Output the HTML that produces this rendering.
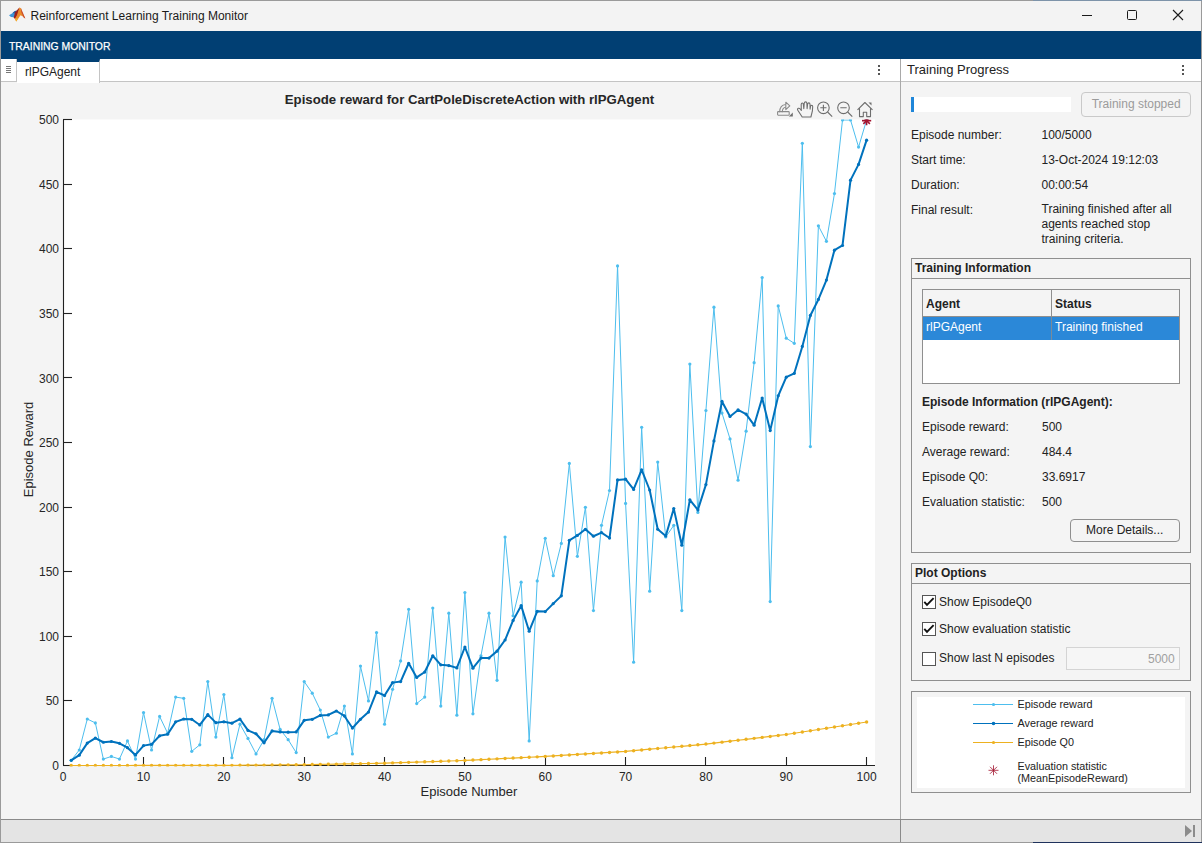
<!DOCTYPE html>
<html><head><meta charset="utf-8">
<style>
*{box-sizing:border-box;margin:0;padding:0}
html,body{width:1202px;height:843px;overflow:hidden;background:#f0f0f0;font-family:"Liberation Sans",sans-serif;font-size:12px;color:#000}
.a{position:absolute}
.t{position:absolute;white-space:nowrap;line-height:14px}
</style></head><body>
<div class="a" style="left:0;top:0;width:1202px;height:843px;background:#f4f4f4;border:1px solid #9a9a9a"></div>
<!-- title bar -->
<div class="a" style="left:1px;top:1px;width:1200px;height:30px;background:#f3f3f3"></div>
<svg class="a" style="left:4px;top:2px" width="26" height="26" viewBox="4 2 26 26">
  <polygon points="9,15.3 12,13.6 14.5,11.5 16.3,11.8 16,15.5 13.5,17.2 11,17" fill="#3b93d6"/>
  <polygon points="12.5,13 14.8,11 17,10.5 15.5,13.5" fill="#2e5e9e"/>
  <polygon points="15,12.5 19.4,7.6 18.5,13 16.5,17.5 14.8,19 13.8,17.2" fill="#9a1f1f"/>
  <polygon points="19.4,7.6 21,8.2 22.5,13 25.3,18.6 22.5,16.3 20.5,15.2 18,19 16.3,21.6 14.8,19 17,15" fill="#ea8a2b"/>
  <polygon points="21,8.2 25.3,18.6 23.8,17.8 21.3,12" fill="#c9472a"/>
  <polygon points="15,19 18,18.2 16.3,21.6" fill="#f6b42a"/>
</svg>
<div class="t" style="left:30.5px;top:9px;font-size:12px;color:#1a1a1a">Reinforcement Learning Training Monitor</div>
<!-- window controls -->
<div class="a" style="left:1082px;top:15px;width:10px;height:1px;background:#1a1a1a"></div>
<div class="a" style="left:1127px;top:10px;width:10px;height:10px;border:1px solid #1a1a1a;border-radius:1.5px"></div>
<svg class="a" style="left:1172px;top:9px" width="12" height="12" viewBox="0 0 12 12"><path d="M1,1 L11,11 M11,1 L1,11" stroke="#1a1a1a" stroke-width="1.1"/></svg>
<!-- blue header -->
<div class="a" style="left:1px;top:31px;width:1200px;height:28px;background:#013f73"></div>
<div class="t" style="left:9px;top:39px;font-size:11px;color:#fff;-webkit-text-stroke:0.25px #fff;transform-origin:0 0;transform:scaleX(0.945)">TRAINING MONITOR</div>

<!-- left tab strip -->
<div class="a" style="left:1px;top:59px;width:899px;height:23px;background:#fff;border-bottom:1px solid #c4c4c4"></div>
<div class="a" style="left:1px;top:59px;width:16px;height:23px;background:#fff;border-right:1px solid #c4c4c4;border-bottom:1px solid #c4c4c4"></div>
<div class="a" style="left:6px;top:66px;width:5px;height:1px;background:#777"></div>
<div class="a" style="left:6px;top:68px;width:5px;height:1px;background:#777"></div>
<div class="a" style="left:6px;top:70px;width:5px;height:1px;background:#777"></div>
<div class="a" style="left:6px;top:72px;width:5px;height:1px;background:#777"></div>
<div class="a" style="left:17px;top:59px;width:83px;height:24px;background:#fff;border-top:3px solid #013f73;border-right:1px solid #c4c4c4"></div>
<div class="t" style="left:25px;top:64.5px;font-size:12px;color:#222">rlPGAgent</div>
<div class="a" style="left:878px;top:65px;width:2px;height:2px;background:#555"></div>
<div class="a" style="left:878px;top:69px;width:2px;height:2px;background:#555"></div>
<div class="a" style="left:878px;top:73px;width:2px;height:2px;background:#555"></div>

<!-- plot -->
<svg width="900" height="819" style="position:absolute;left:0;top:0">
<defs><clipPath id="ax"><rect x="63" y="119.5" width="812" height="647"/></clipPath></defs>
<rect x="63.5" y="119.5" width="811.5" height="646" fill="#fff"/>
<g stroke="#212121" stroke-width="1.1"><line x1="63.5" y1="119.5" x2="63.5" y2="765.5"/><line x1="63" y1="765.5" x2="875" y2="765.5"/><line x1="63" y1="765.50" x2="72" y2="765.50"/><line x1="63" y1="700.50" x2="72" y2="700.50"/><line x1="63" y1="636.50" x2="72" y2="636.50"/><line x1="63" y1="571.50" x2="72" y2="571.50"/><line x1="63" y1="507.50" x2="72" y2="507.50"/><line x1="63" y1="442.50" x2="72" y2="442.50"/><line x1="63" y1="377.50" x2="72" y2="377.50"/><line x1="63" y1="313.50" x2="72" y2="313.50"/><line x1="63" y1="248.50" x2="72" y2="248.50"/><line x1="63" y1="184.50" x2="72" y2="184.50"/><line x1="63" y1="119.50" x2="72" y2="119.50"/><line x1="143.50" y1="765.5" x2="143.50" y2="757"/><line x1="223.50" y1="765.5" x2="223.50" y2="757"/><line x1="304.50" y1="765.5" x2="304.50" y2="757"/><line x1="384.50" y1="765.5" x2="384.50" y2="757"/><line x1="464.50" y1="765.5" x2="464.50" y2="757"/><line x1="545.50" y1="765.5" x2="545.50" y2="757"/><line x1="625.50" y1="765.5" x2="625.50" y2="757"/><line x1="705.50" y1="765.5" x2="705.50" y2="757"/><line x1="786.50" y1="765.5" x2="786.50" y2="757"/><line x1="866.50" y1="765.5" x2="866.50" y2="757"/></g>
<g clip-path="url(#ax)">
<polyline points="71.23,760.34 79.27,750.01 87.30,719.02 95.34,722.90 103.37,759.04 111.40,756.46 119.44,759.04 127.47,740.97 135.51,759.04 143.54,712.57 151.57,750.01 159.61,716.44 167.64,733.23 175.68,697.08 183.71,698.37 191.74,751.30 199.78,744.84 207.81,681.59 215.85,737.10 223.88,694.50 231.91,757.75 239.95,724.19 247.98,738.39 256.02,753.88 264.05,739.68 272.08,698.37 280.12,729.35 288.15,739.68 296.19,752.59 304.22,681.59 312.25,693.20 320.29,709.99 328.32,737.10 336.36,733.23 344.39,706.11 352.42,753.88 360.46,666.09 368.49,700.95 376.53,632.53 384.56,724.19 392.59,689.33 400.63,660.93 408.66,609.29 416.70,703.53 424.73,697.08 432.76,608.00 440.80,706.11 448.83,613.16 456.87,715.15 464.90,592.51 472.93,713.86 480.97,655.76 489.00,613.16 497.04,680.29 505.07,536.99 513.10,615.74 521.14,582.18 529.17,740.97 537.21,580.89 545.24,538.28 553.27,575.72 561.31,543.45 569.34,463.41 577.38,556.36 585.41,507.30 593.44,610.58 601.48,525.37 609.51,490.52 617.55,265.88 625.58,503.43 633.61,662.22 641.65,427.26 649.68,591.22 657.72,462.12 665.75,536.99 673.78,525.37 681.82,610.58 689.85,364.00 697.89,512.46 705.92,410.48 713.95,307.20 721.99,413.06 730.02,438.88 738.06,480.19 746.09,431.13 754.12,362.71 762.16,277.50 770.19,601.54 778.23,305.90 786.26,338.18 794.29,343.34 802.33,143.24 810.36,446.62 818.40,225.86 826.43,241.35 834.46,193.59 842.50,120.00 850.53,120.00 858.57,147.11 866.60,120.00" fill="none" stroke="#4DBEEE" stroke-width="1" stroke-linejoin="round"/>
<g fill="#4DBEEE"><circle cx="71.23" cy="760.34" r="1.6"/><circle cx="79.27" cy="750.01" r="1.6"/><circle cx="87.30" cy="719.02" r="1.6"/><circle cx="95.34" cy="722.90" r="1.6"/><circle cx="103.37" cy="759.04" r="1.6"/><circle cx="111.40" cy="756.46" r="1.6"/><circle cx="119.44" cy="759.04" r="1.6"/><circle cx="127.47" cy="740.97" r="1.6"/><circle cx="135.51" cy="759.04" r="1.6"/><circle cx="143.54" cy="712.57" r="1.6"/><circle cx="151.57" cy="750.01" r="1.6"/><circle cx="159.61" cy="716.44" r="1.6"/><circle cx="167.64" cy="733.23" r="1.6"/><circle cx="175.68" cy="697.08" r="1.6"/><circle cx="183.71" cy="698.37" r="1.6"/><circle cx="191.74" cy="751.30" r="1.6"/><circle cx="199.78" cy="744.84" r="1.6"/><circle cx="207.81" cy="681.59" r="1.6"/><circle cx="215.85" cy="737.10" r="1.6"/><circle cx="223.88" cy="694.50" r="1.6"/><circle cx="231.91" cy="757.75" r="1.6"/><circle cx="239.95" cy="724.19" r="1.6"/><circle cx="247.98" cy="738.39" r="1.6"/><circle cx="256.02" cy="753.88" r="1.6"/><circle cx="264.05" cy="739.68" r="1.6"/><circle cx="272.08" cy="698.37" r="1.6"/><circle cx="280.12" cy="729.35" r="1.6"/><circle cx="288.15" cy="739.68" r="1.6"/><circle cx="296.19" cy="752.59" r="1.6"/><circle cx="304.22" cy="681.59" r="1.6"/><circle cx="312.25" cy="693.20" r="1.6"/><circle cx="320.29" cy="709.99" r="1.6"/><circle cx="328.32" cy="737.10" r="1.6"/><circle cx="336.36" cy="733.23" r="1.6"/><circle cx="344.39" cy="706.11" r="1.6"/><circle cx="352.42" cy="753.88" r="1.6"/><circle cx="360.46" cy="666.09" r="1.6"/><circle cx="368.49" cy="700.95" r="1.6"/><circle cx="376.53" cy="632.53" r="1.6"/><circle cx="384.56" cy="724.19" r="1.6"/><circle cx="392.59" cy="689.33" r="1.6"/><circle cx="400.63" cy="660.93" r="1.6"/><circle cx="408.66" cy="609.29" r="1.6"/><circle cx="416.70" cy="703.53" r="1.6"/><circle cx="424.73" cy="697.08" r="1.6"/><circle cx="432.76" cy="608.00" r="1.6"/><circle cx="440.80" cy="706.11" r="1.6"/><circle cx="448.83" cy="613.16" r="1.6"/><circle cx="456.87" cy="715.15" r="1.6"/><circle cx="464.90" cy="592.51" r="1.6"/><circle cx="472.93" cy="713.86" r="1.6"/><circle cx="480.97" cy="655.76" r="1.6"/><circle cx="489.00" cy="613.16" r="1.6"/><circle cx="497.04" cy="680.29" r="1.6"/><circle cx="505.07" cy="536.99" r="1.6"/><circle cx="513.10" cy="615.74" r="1.6"/><circle cx="521.14" cy="582.18" r="1.6"/><circle cx="529.17" cy="740.97" r="1.6"/><circle cx="537.21" cy="580.89" r="1.6"/><circle cx="545.24" cy="538.28" r="1.6"/><circle cx="553.27" cy="575.72" r="1.6"/><circle cx="561.31" cy="543.45" r="1.6"/><circle cx="569.34" cy="463.41" r="1.6"/><circle cx="577.38" cy="556.36" r="1.6"/><circle cx="585.41" cy="507.30" r="1.6"/><circle cx="593.44" cy="610.58" r="1.6"/><circle cx="601.48" cy="525.37" r="1.6"/><circle cx="609.51" cy="490.52" r="1.6"/><circle cx="617.55" cy="265.88" r="1.6"/><circle cx="625.58" cy="503.43" r="1.6"/><circle cx="633.61" cy="662.22" r="1.6"/><circle cx="641.65" cy="427.26" r="1.6"/><circle cx="649.68" cy="591.22" r="1.6"/><circle cx="657.72" cy="462.12" r="1.6"/><circle cx="665.75" cy="536.99" r="1.6"/><circle cx="673.78" cy="525.37" r="1.6"/><circle cx="681.82" cy="610.58" r="1.6"/><circle cx="689.85" cy="364.00" r="1.6"/><circle cx="697.89" cy="512.46" r="1.6"/><circle cx="705.92" cy="410.48" r="1.6"/><circle cx="713.95" cy="307.20" r="1.6"/><circle cx="721.99" cy="413.06" r="1.6"/><circle cx="730.02" cy="438.88" r="1.6"/><circle cx="738.06" cy="480.19" r="1.6"/><circle cx="746.09" cy="431.13" r="1.6"/><circle cx="754.12" cy="362.71" r="1.6"/><circle cx="762.16" cy="277.50" r="1.6"/><circle cx="770.19" cy="601.54" r="1.6"/><circle cx="778.23" cy="305.90" r="1.6"/><circle cx="786.26" cy="338.18" r="1.6"/><circle cx="794.29" cy="343.34" r="1.6"/><circle cx="802.33" cy="143.24" r="1.6"/><circle cx="810.36" cy="446.62" r="1.6"/><circle cx="818.40" cy="225.86" r="1.6"/><circle cx="826.43" cy="241.35" r="1.6"/><circle cx="834.46" cy="193.59" r="1.6"/><circle cx="842.50" cy="120.00" r="1.6"/><circle cx="850.53" cy="120.00" r="1.6"/><circle cx="858.57" cy="147.11" r="1.6"/><circle cx="866.60" cy="120.00" r="1.6"/></g>
<polyline points="71.23,760.34 79.27,755.17 87.30,743.12 95.34,738.07 103.37,742.26 111.40,741.49 119.44,743.29 127.47,747.68 135.51,754.91 143.54,745.62 151.57,744.33 159.61,735.81 167.64,734.26 175.68,721.86 183.71,719.02 191.74,719.28 199.78,724.96 207.81,714.63 215.85,722.64 223.88,721.86 231.91,723.16 239.95,719.02 247.98,730.38 256.02,733.74 264.05,742.78 272.08,730.90 280.12,731.93 288.15,732.19 296.19,731.93 304.22,720.32 312.25,719.28 320.29,715.41 328.32,714.89 336.36,711.02 344.39,715.93 352.42,728.06 360.46,719.28 368.49,712.05 376.53,691.91 384.56,695.53 392.59,682.62 400.63,681.59 408.66,663.25 416.70,677.45 424.73,672.03 432.76,655.76 440.80,664.80 448.83,665.58 456.87,667.90 464.90,646.99 472.93,668.16 480.97,658.09 489.00,658.09 497.04,651.12 505.07,640.01 513.10,620.39 521.14,605.67 529.17,631.24 537.21,611.35 545.24,611.61 553.27,603.61 561.31,595.86 569.34,540.35 577.38,535.44 585.41,529.25 593.44,536.22 601.48,532.60 609.51,538.03 617.55,479.93 625.58,479.16 633.61,489.48 641.65,469.86 649.68,490.00 657.72,529.25 665.75,535.96 673.78,508.59 681.82,545.26 689.85,499.81 697.89,509.88 705.92,484.58 713.95,440.94 721.99,401.44 730.02,416.41 738.06,409.96 746.09,414.09 754.12,425.19 762.16,398.08 770.19,430.61 778.23,395.76 786.26,377.17 794.29,373.29 802.33,346.44 810.36,315.46 818.40,299.45 826.43,280.08 834.46,250.13 842.50,245.49 850.53,180.16 858.57,164.41 866.60,140.14" fill="none" stroke="#0072BD" stroke-width="2" stroke-linejoin="round"/>
<g fill="#0072BD"><circle cx="71.23" cy="760.34" r="1.6"/><circle cx="79.27" cy="755.17" r="1.6"/><circle cx="87.30" cy="743.12" r="1.6"/><circle cx="95.34" cy="738.07" r="1.6"/><circle cx="103.37" cy="742.26" r="1.6"/><circle cx="111.40" cy="741.49" r="1.6"/><circle cx="119.44" cy="743.29" r="1.6"/><circle cx="127.47" cy="747.68" r="1.6"/><circle cx="135.51" cy="754.91" r="1.6"/><circle cx="143.54" cy="745.62" r="1.6"/><circle cx="151.57" cy="744.33" r="1.6"/><circle cx="159.61" cy="735.81" r="1.6"/><circle cx="167.64" cy="734.26" r="1.6"/><circle cx="175.68" cy="721.86" r="1.6"/><circle cx="183.71" cy="719.02" r="1.6"/><circle cx="191.74" cy="719.28" r="1.6"/><circle cx="199.78" cy="724.96" r="1.6"/><circle cx="207.81" cy="714.63" r="1.6"/><circle cx="215.85" cy="722.64" r="1.6"/><circle cx="223.88" cy="721.86" r="1.6"/><circle cx="231.91" cy="723.16" r="1.6"/><circle cx="239.95" cy="719.02" r="1.6"/><circle cx="247.98" cy="730.38" r="1.6"/><circle cx="256.02" cy="733.74" r="1.6"/><circle cx="264.05" cy="742.78" r="1.6"/><circle cx="272.08" cy="730.90" r="1.6"/><circle cx="280.12" cy="731.93" r="1.6"/><circle cx="288.15" cy="732.19" r="1.6"/><circle cx="296.19" cy="731.93" r="1.6"/><circle cx="304.22" cy="720.32" r="1.6"/><circle cx="312.25" cy="719.28" r="1.6"/><circle cx="320.29" cy="715.41" r="1.6"/><circle cx="328.32" cy="714.89" r="1.6"/><circle cx="336.36" cy="711.02" r="1.6"/><circle cx="344.39" cy="715.93" r="1.6"/><circle cx="352.42" cy="728.06" r="1.6"/><circle cx="360.46" cy="719.28" r="1.6"/><circle cx="368.49" cy="712.05" r="1.6"/><circle cx="376.53" cy="691.91" r="1.6"/><circle cx="384.56" cy="695.53" r="1.6"/><circle cx="392.59" cy="682.62" r="1.6"/><circle cx="400.63" cy="681.59" r="1.6"/><circle cx="408.66" cy="663.25" r="1.6"/><circle cx="416.70" cy="677.45" r="1.6"/><circle cx="424.73" cy="672.03" r="1.6"/><circle cx="432.76" cy="655.76" r="1.6"/><circle cx="440.80" cy="664.80" r="1.6"/><circle cx="448.83" cy="665.58" r="1.6"/><circle cx="456.87" cy="667.90" r="1.6"/><circle cx="464.90" cy="646.99" r="1.6"/><circle cx="472.93" cy="668.16" r="1.6"/><circle cx="480.97" cy="658.09" r="1.6"/><circle cx="489.00" cy="658.09" r="1.6"/><circle cx="497.04" cy="651.12" r="1.6"/><circle cx="505.07" cy="640.01" r="1.6"/><circle cx="513.10" cy="620.39" r="1.6"/><circle cx="521.14" cy="605.67" r="1.6"/><circle cx="529.17" cy="631.24" r="1.6"/><circle cx="537.21" cy="611.35" r="1.6"/><circle cx="545.24" cy="611.61" r="1.6"/><circle cx="553.27" cy="603.61" r="1.6"/><circle cx="561.31" cy="595.86" r="1.6"/><circle cx="569.34" cy="540.35" r="1.6"/><circle cx="577.38" cy="535.44" r="1.6"/><circle cx="585.41" cy="529.25" r="1.6"/><circle cx="593.44" cy="536.22" r="1.6"/><circle cx="601.48" cy="532.60" r="1.6"/><circle cx="609.51" cy="538.03" r="1.6"/><circle cx="617.55" cy="479.93" r="1.6"/><circle cx="625.58" cy="479.16" r="1.6"/><circle cx="633.61" cy="489.48" r="1.6"/><circle cx="641.65" cy="469.86" r="1.6"/><circle cx="649.68" cy="490.00" r="1.6"/><circle cx="657.72" cy="529.25" r="1.6"/><circle cx="665.75" cy="535.96" r="1.6"/><circle cx="673.78" cy="508.59" r="1.6"/><circle cx="681.82" cy="545.26" r="1.6"/><circle cx="689.85" cy="499.81" r="1.6"/><circle cx="697.89" cy="509.88" r="1.6"/><circle cx="705.92" cy="484.58" r="1.6"/><circle cx="713.95" cy="440.94" r="1.6"/><circle cx="721.99" cy="401.44" r="1.6"/><circle cx="730.02" cy="416.41" r="1.6"/><circle cx="738.06" cy="409.96" r="1.6"/><circle cx="746.09" cy="414.09" r="1.6"/><circle cx="754.12" cy="425.19" r="1.6"/><circle cx="762.16" cy="398.08" r="1.6"/><circle cx="770.19" cy="430.61" r="1.6"/><circle cx="778.23" cy="395.76" r="1.6"/><circle cx="786.26" cy="377.17" r="1.6"/><circle cx="794.29" cy="373.29" r="1.6"/><circle cx="802.33" cy="346.44" r="1.6"/><circle cx="810.36" cy="315.46" r="1.6"/><circle cx="818.40" cy="299.45" r="1.6"/><circle cx="826.43" cy="280.08" r="1.6"/><circle cx="834.46" cy="250.13" r="1.6"/><circle cx="842.50" cy="245.49" r="1.6"/><circle cx="850.53" cy="180.16" r="1.6"/><circle cx="858.57" cy="164.41" r="1.6"/><circle cx="866.60" cy="140.14" r="1.6"/></g>
<polyline points="71.23,765.50 79.27,765.50 87.30,765.49 95.34,765.49 103.37,765.49 111.40,765.48 119.44,765.48 127.47,765.48 135.51,765.47 143.54,765.47 151.57,765.47 159.61,765.46 167.64,765.46 175.68,765.46 183.71,765.45 191.74,765.45 199.78,765.45 207.81,765.44 215.85,765.44 223.88,765.44 231.91,765.36 239.95,765.29 247.98,765.22 256.02,765.15 264.05,765.08 272.08,765.01 280.12,764.94 288.15,764.87 296.19,764.80 304.22,764.73 312.25,764.57 320.29,764.42 328.32,764.26 336.36,764.11 344.39,763.95 352.42,763.80 360.46,763.64 368.49,763.49 376.53,763.33 384.56,763.18 392.59,762.91 400.63,762.63 408.66,762.36 416.70,762.09 424.73,761.82 432.76,761.55 440.80,761.28 448.83,761.01 456.87,760.74 464.90,760.47 472.93,760.06 480.97,759.66 489.00,759.26 497.04,758.86 505.07,758.46 513.10,758.06 521.14,757.66 529.17,757.26 537.21,756.86 545.24,756.46 553.27,755.96 561.31,755.46 569.34,754.95 577.38,754.45 585.41,753.95 593.44,753.44 601.48,752.94 609.51,752.44 617.55,751.93 625.58,751.43 633.61,750.69 641.65,749.96 649.68,749.22 657.72,748.48 665.75,747.75 673.78,747.01 681.82,746.28 689.85,745.54 697.89,744.81 705.92,744.07 713.95,743.11 721.99,742.16 730.02,741.20 738.06,740.25 746.09,739.29 754.12,738.34 762.16,737.38 770.19,736.43 778.23,735.47 786.26,734.52 794.29,733.27 802.33,732.01 810.36,730.76 818.40,729.51 826.43,728.26 834.46,727.01 842.50,725.76 850.53,724.51 858.57,723.26 866.60,722.01" fill="none" stroke="#EDB120" stroke-width="1.2"/>
<g fill="#EDB120"><circle cx="71.23" cy="765.50" r="1.7"/><circle cx="79.27" cy="765.50" r="1.7"/><circle cx="87.30" cy="765.49" r="1.7"/><circle cx="95.34" cy="765.49" r="1.7"/><circle cx="103.37" cy="765.49" r="1.7"/><circle cx="111.40" cy="765.48" r="1.7"/><circle cx="119.44" cy="765.48" r="1.7"/><circle cx="127.47" cy="765.48" r="1.7"/><circle cx="135.51" cy="765.47" r="1.7"/><circle cx="143.54" cy="765.47" r="1.7"/><circle cx="151.57" cy="765.47" r="1.7"/><circle cx="159.61" cy="765.46" r="1.7"/><circle cx="167.64" cy="765.46" r="1.7"/><circle cx="175.68" cy="765.46" r="1.7"/><circle cx="183.71" cy="765.45" r="1.7"/><circle cx="191.74" cy="765.45" r="1.7"/><circle cx="199.78" cy="765.45" r="1.7"/><circle cx="207.81" cy="765.44" r="1.7"/><circle cx="215.85" cy="765.44" r="1.7"/><circle cx="223.88" cy="765.44" r="1.7"/><circle cx="231.91" cy="765.36" r="1.7"/><circle cx="239.95" cy="765.29" r="1.7"/><circle cx="247.98" cy="765.22" r="1.7"/><circle cx="256.02" cy="765.15" r="1.7"/><circle cx="264.05" cy="765.08" r="1.7"/><circle cx="272.08" cy="765.01" r="1.7"/><circle cx="280.12" cy="764.94" r="1.7"/><circle cx="288.15" cy="764.87" r="1.7"/><circle cx="296.19" cy="764.80" r="1.7"/><circle cx="304.22" cy="764.73" r="1.7"/><circle cx="312.25" cy="764.57" r="1.7"/><circle cx="320.29" cy="764.42" r="1.7"/><circle cx="328.32" cy="764.26" r="1.7"/><circle cx="336.36" cy="764.11" r="1.7"/><circle cx="344.39" cy="763.95" r="1.7"/><circle cx="352.42" cy="763.80" r="1.7"/><circle cx="360.46" cy="763.64" r="1.7"/><circle cx="368.49" cy="763.49" r="1.7"/><circle cx="376.53" cy="763.33" r="1.7"/><circle cx="384.56" cy="763.18" r="1.7"/><circle cx="392.59" cy="762.91" r="1.7"/><circle cx="400.63" cy="762.63" r="1.7"/><circle cx="408.66" cy="762.36" r="1.7"/><circle cx="416.70" cy="762.09" r="1.7"/><circle cx="424.73" cy="761.82" r="1.7"/><circle cx="432.76" cy="761.55" r="1.7"/><circle cx="440.80" cy="761.28" r="1.7"/><circle cx="448.83" cy="761.01" r="1.7"/><circle cx="456.87" cy="760.74" r="1.7"/><circle cx="464.90" cy="760.47" r="1.7"/><circle cx="472.93" cy="760.06" r="1.7"/><circle cx="480.97" cy="759.66" r="1.7"/><circle cx="489.00" cy="759.26" r="1.7"/><circle cx="497.04" cy="758.86" r="1.7"/><circle cx="505.07" cy="758.46" r="1.7"/><circle cx="513.10" cy="758.06" r="1.7"/><circle cx="521.14" cy="757.66" r="1.7"/><circle cx="529.17" cy="757.26" r="1.7"/><circle cx="537.21" cy="756.86" r="1.7"/><circle cx="545.24" cy="756.46" r="1.7"/><circle cx="553.27" cy="755.96" r="1.7"/><circle cx="561.31" cy="755.46" r="1.7"/><circle cx="569.34" cy="754.95" r="1.7"/><circle cx="577.38" cy="754.45" r="1.7"/><circle cx="585.41" cy="753.95" r="1.7"/><circle cx="593.44" cy="753.44" r="1.7"/><circle cx="601.48" cy="752.94" r="1.7"/><circle cx="609.51" cy="752.44" r="1.7"/><circle cx="617.55" cy="751.93" r="1.7"/><circle cx="625.58" cy="751.43" r="1.7"/><circle cx="633.61" cy="750.69" r="1.7"/><circle cx="641.65" cy="749.96" r="1.7"/><circle cx="649.68" cy="749.22" r="1.7"/><circle cx="657.72" cy="748.48" r="1.7"/><circle cx="665.75" cy="747.75" r="1.7"/><circle cx="673.78" cy="747.01" r="1.7"/><circle cx="681.82" cy="746.28" r="1.7"/><circle cx="689.85" cy="745.54" r="1.7"/><circle cx="697.89" cy="744.81" r="1.7"/><circle cx="705.92" cy="744.07" r="1.7"/><circle cx="713.95" cy="743.11" r="1.7"/><circle cx="721.99" cy="742.16" r="1.7"/><circle cx="730.02" cy="741.20" r="1.7"/><circle cx="738.06" cy="740.25" r="1.7"/><circle cx="746.09" cy="739.29" r="1.7"/><circle cx="754.12" cy="738.34" r="1.7"/><circle cx="762.16" cy="737.38" r="1.7"/><circle cx="770.19" cy="736.43" r="1.7"/><circle cx="778.23" cy="735.47" r="1.7"/><circle cx="786.26" cy="734.52" r="1.7"/><circle cx="794.29" cy="733.27" r="1.7"/><circle cx="802.33" cy="732.01" r="1.7"/><circle cx="810.36" cy="730.76" r="1.7"/><circle cx="818.40" cy="729.51" r="1.7"/><circle cx="826.43" cy="728.26" r="1.7"/><circle cx="834.46" cy="727.01" r="1.7"/><circle cx="842.50" cy="725.76" r="1.7"/><circle cx="850.53" cy="724.51" r="1.7"/><circle cx="858.57" cy="723.26" r="1.7"/><circle cx="866.60" cy="722.01" r="1.7"/></g>
<g stroke="#A2142F" stroke-width="1.6"><line x1="862.00" y1="120.60" x2="871.20" y2="120.60"/><line x1="863.35" y1="117.35" x2="869.85" y2="123.85"/><line x1="866.60" y1="116.00" x2="866.60" y2="125.20"/><line x1="869.85" y1="117.35" x2="863.35" y2="123.85"/></g>
</g>
<g font-family="Liberation Sans" font-size="12" fill="#262626"><text x="59" y="769.80" text-anchor="end">0</text><text x="59" y="705.25" text-anchor="end">50</text><text x="59" y="640.70" text-anchor="end">100</text><text x="59" y="576.15" text-anchor="end">150</text><text x="59" y="511.60" text-anchor="end">200</text><text x="59" y="447.05" text-anchor="end">250</text><text x="59" y="382.50" text-anchor="end">300</text><text x="59" y="317.95" text-anchor="end">350</text><text x="59" y="253.40" text-anchor="end">400</text><text x="59" y="188.85" text-anchor="end">450</text><text x="59" y="124.30" text-anchor="end">500</text><text x="63.20" y="780.8" text-anchor="middle">0</text><text x="143.54" y="780.8" text-anchor="middle">10</text><text x="223.88" y="780.8" text-anchor="middle">20</text><text x="304.22" y="780.8" text-anchor="middle">30</text><text x="384.56" y="780.8" text-anchor="middle">40</text><text x="464.90" y="780.8" text-anchor="middle">50</text><text x="545.24" y="780.8" text-anchor="middle">60</text><text x="625.58" y="780.8" text-anchor="middle">70</text><text x="705.92" y="780.8" text-anchor="middle">80</text><text x="786.26" y="780.8" text-anchor="middle">90</text><text x="866.60" y="780.8" text-anchor="middle">100</text></g>
<text x="469" y="795.6" text-anchor="middle" font-family="Liberation Sans" font-size="13" fill="#262626">Episode Number</text>
<text transform="translate(33,449.5) rotate(-90)" text-anchor="middle" font-family="Liberation Sans" font-size="13" fill="#262626">Episode Reward</text>
<text x="469.5" y="104" text-anchor="middle" font-family="Liberation Sans" font-size="13.2" font-weight="bold" fill="#262626">Episode reward for CartPoleDiscreteAction with rlPGAgent</text>
</svg>
<!-- axes toolbar -->
<svg class="a" style="left:774px;top:98px" width="104" height="22" viewBox="774 97.4 104 22">
 <g fill="none" stroke="#8a8a8a" stroke-width="1.1" stroke-linejoin="round">
  <rect x="777.6" y="111" width="11.6" height="3.6" rx="0.6"/>
  <path d="M779.6,111.6 Q779.8,104.2 785.8,103.9 M782.2,111.6 Q782.4,106.8 785.8,106.6"/>
  <path d="M785.8,101.6 L789.8,105.3 L785.8,109 Z" fill="#f4f4f4"/>
 </g>
 <path d="M788.8,116 l4,-4 v4 z" fill="#6e6e6e"/>
 <g fill="none" stroke="#6e6e6e" stroke-width="1.1" stroke-linejoin="round">
  <path d="M802.2,116.4 L797.8,109.6 Q797,108.2 798.3,107.7 Q799.3,107.4 800.2,108.4 L801.3,109.9 L801.2,104 Q801.2,102.4 802.3,102.4 Q803.3,102.4 803.4,104 L803.8,108 L804.2,102.9 Q804.4,101.3 805.6,101.3 Q806.8,101.3 806.9,102.9 L807.1,108 L807.6,103.6 Q807.8,102.3 808.8,102.3 Q809.9,102.3 810,103.6 L810.1,108.5 L810.5,105.9 Q810.7,104.7 811.7,104.7 Q812.7,104.8 812.7,106.1 L812.4,110.2 L810.9,116.4 Z"/>
  <circle cx="823.4" cy="107.2" r="5.8"/>
  <path d="M820.3,107.2 h6.2 M823.4,104.1 v6.2 M827.6,111.4 l4.6,4.6"/>
  <circle cx="843.5" cy="107.2" r="5.8"/>
  <path d="M840.3,107.2 h6.4 M847.7,111.4 l4.6,4.6"/>
  <path d="M857.5,109.2 l7.4,-7.3 l7.6,7.3 M859.5,108 v8 h3.8 v-4.4 h3.4 v4.4 h3.8 v-8"/>
 </g>
 <path d="M868.5,102 h3 v3 z" fill="#6e6e6e"/>
</svg>

<!-- right panel -->
<div class="a" style="left:900px;top:59px;width:1px;height:783px;background:#a9a9a9"></div>
<div class="a" style="left:901px;top:59px;width:300px;height:23px;background:#fff;border-bottom:1px solid #c4c4c4"></div>
<div class="t" style="left:907px;top:63px;font-size:13px;color:#222">Training Progress</div>
<div class="a" style="left:1182px;top:65px;width:2px;height:2px;background:#555"></div>
<div class="a" style="left:1182px;top:69px;width:2px;height:2px;background:#555"></div>
<div class="a" style="left:1182px;top:73px;width:2px;height:2px;background:#555"></div>

<div class="a" style="left:911px;top:97px;width:160px;height:15px;background:#fff"></div>
<div class="a" style="left:911px;top:97px;width:3px;height:15px;background:#1f86d9"></div>
<div class="a" style="left:1081px;top:92px;width:110px;height:25px;border:1px solid #c9c9c9;border-radius:4px;background:#f4f4f4"></div>
<div class="t" style="left:1091.7px;top:97px;color:#9b9b9b">Training stopped</div>

<div class="t" style="left:911px;top:128px;color:#222">Episode number:</div>
<div class="t" style="left:1041.5px;top:128px;color:#222">100/5000</div>
<div class="t" style="left:911px;top:153px;color:#222">Start time:</div>
<div class="t" style="left:1041.5px;top:153px;color:#222">13-Oct-2024 19:12:03</div>
<div class="t" style="left:911px;top:178px;color:#222">Duration:</div>
<div class="t" style="left:1041.5px;top:178px;color:#222">00:00:54</div>
<div class="t" style="left:911px;top:203px;color:#222">Final result:</div>
<div class="t" style="left:1041.5px;top:202px;color:#222;line-height:15px">Training finished after all<br>agents reached stop<br>training criteria.</div>

<!-- Training information panel -->
<div class="a" style="left:911px;top:258px;width:280px;height:295px;border:1px solid #8f8f8f"></div>
<div class="a" style="left:912px;top:278px;width:278px;height:1px;background:#8f8f8f"></div>
<div class="t" style="left:915px;top:261px;font-weight:bold;color:#222">Training Information</div>
<div class="a" style="left:922px;top:289px;width:258px;height:95px;border:1px solid #8f8f8f;background:#fff"></div>
<div class="a" style="left:923px;top:290px;width:256px;height:27px;background:#f4f4f4;border-bottom:1px solid #8f8f8f"></div>
<div class="a" style="left:1051px;top:290px;width:1px;height:49px;background:#8f8f8f"></div>
<div class="t" style="left:926px;top:297px;font-weight:bold;color:#222">Agent</div>
<div class="t" style="left:1055px;top:297px;font-weight:bold;color:#222">Status</div>
<div class="a" style="left:923px;top:317px;width:256px;height:23px;background:#2b88d8"></div>
<div class="a" style="left:1051px;top:317px;width:1px;height:23px;background:#7a8a99"></div>
<div class="t" style="left:926px;top:320px;color:#fff">rlPGAgent</div>
<div class="t" style="left:1055px;top:320px;color:#fff">Training finished</div>

<div class="t" style="left:922px;top:395px;font-weight:bold;color:#222">Episode Information (rlPGAgent):</div>
<div class="t" style="left:922px;top:420px;color:#222">Episode reward:</div>
<div class="t" style="left:1042px;top:420px;color:#222">500</div>
<div class="t" style="left:922px;top:445px;color:#222">Average reward:</div>
<div class="t" style="left:1042px;top:445px;color:#222">484.4</div>
<div class="t" style="left:922px;top:470px;color:#222">Episode Q0:</div>
<div class="t" style="left:1042px;top:470px;color:#222">33.6917</div>
<div class="t" style="left:922px;top:495px;color:#222">Evaluation statistic:</div>
<div class="t" style="left:1042px;top:495px;color:#222">500</div>
<div class="a" style="left:1070px;top:519px;width:110px;height:23px;border:1px solid #8f8f8f;border-radius:4px;background:#f4f4f4"></div>
<div class="t" style="left:1086px;top:523px;color:#222">More Details...</div>

<!-- Plot options -->
<div class="a" style="left:911px;top:563px;width:280px;height:118px;border:1px solid #8f8f8f"></div>
<div class="a" style="left:912px;top:583px;width:278px;height:1px;background:#8f8f8f"></div>
<div class="t" style="left:915px;top:566px;font-weight:bold;color:#222">Plot Options</div>
<div class="a" style="left:922px;top:595px;width:14px;height:14px;border:1px solid #555;background:#fff"></div>
<svg class="a" style="left:922px;top:595px" width="14" height="14"><path d="M2.3,6.8 L5,9.8 L11.6,3.2" fill="none" stroke="#111" stroke-width="1.9"/></svg>
<div class="t" style="left:939px;top:595px;color:#222">Show EpisodeQ0</div>
<div class="a" style="left:922px;top:622px;width:14px;height:14px;border:1px solid #555;background:#fff"></div>
<svg class="a" style="left:922px;top:622px" width="14" height="14"><path d="M2.3,6.8 L5,9.8 L11.6,3.2" fill="none" stroke="#111" stroke-width="1.9"/></svg>
<div class="t" style="left:939px;top:622px;color:#222">Show evaluation statistic</div>
<div class="a" style="left:922px;top:652px;width:14px;height:14px;border:1px solid #555;background:#fff"></div>
<div class="t" style="left:939px;top:651px;color:#222">Show last N episodes</div>
<div class="a" style="left:1066px;top:647px;width:114px;height:23px;border:1px solid #d4d4d4;background:#f6f6f6"></div>
<div class="t" style="left:1148px;top:652px;color:#a0a0a0">5000</div>

<!-- legend -->
<div class="a" style="left:911px;top:691px;width:280px;height:102px;border:1px solid #8f8f8f"></div>
<div class="a" style="left:917px;top:697px;width:268px;height:91px;background:#fff"></div>
<svg class="a" style="left:960px;top:695px" width="70" height="90">
 <line x1="13" y1="9.5" x2="53" y2="9.5" stroke="#4DBEEE" stroke-width="1"/><circle cx="33.5" cy="9.5" r="1.6" fill="#4DBEEE"/>
 <line x1="13" y1="28.5" x2="53" y2="28.5" stroke="#0072BD" stroke-width="1"/><circle cx="33.5" cy="28.5" r="1.8" fill="#0072BD"/>
 <line x1="13" y1="47.5" x2="53" y2="47.5" stroke="#EDB120" stroke-width="1"/><circle cx="33.5" cy="47.5" r="1.6" fill="#EDB120"/>
 <g stroke="#A2142F" stroke-width="0.8"><line x1="28.5" y1="75.3" x2="38.5" y2="75.3"/><line x1="33.5" y1="70.3" x2="33.5" y2="80.3"/><line x1="30" y1="71.8" x2="37" y2="78.8"/><line x1="37" y1="71.8" x2="30" y2="78.8"/></g>
</svg>
<div class="t" style="left:1017.5px;top:697.7px;font-size:10.8px;line-height:13px;color:#222">Episode reward</div>
<div class="t" style="left:1017.5px;top:716.7px;font-size:10.8px;line-height:13px;color:#222">Average reward</div>
<div class="t" style="left:1017.5px;top:735.7px;font-size:10.8px;line-height:13px;color:#222">Episode Q0</div>
<div class="t" style="left:1017.5px;top:759.5px;font-size:10.8px;line-height:12px;color:#222">Evaluation statistic<br>(MeanEpisodeReward)</div>

<!-- status bar -->
<div class="a" style="left:1px;top:819px;width:1200px;height:1px;background:#8a8a8a"></div>
<div class="a" style="left:1px;top:820px;width:1200px;height:22px;background:#e4e4e4"></div>
<div class="a" style="left:900px;top:819px;width:1px;height:23px;background:#8a8a8a"></div>
<svg class="a" style="left:1184px;top:824px" width="12" height="14"><path d="M1,1 L8,7 L1,13 z" fill="#8c8c8c"/><rect x="9" y="1" width="2" height="12" fill="#8c8c8c"/></svg>
<div class="a" style="left:1033px;top:0;width:169px;height:1px;background:#7d93a9"></div>
<div class="a" style="left:1033px;top:842px;width:169px;height:1px;background:#1f325c"></div>
</body></html>
